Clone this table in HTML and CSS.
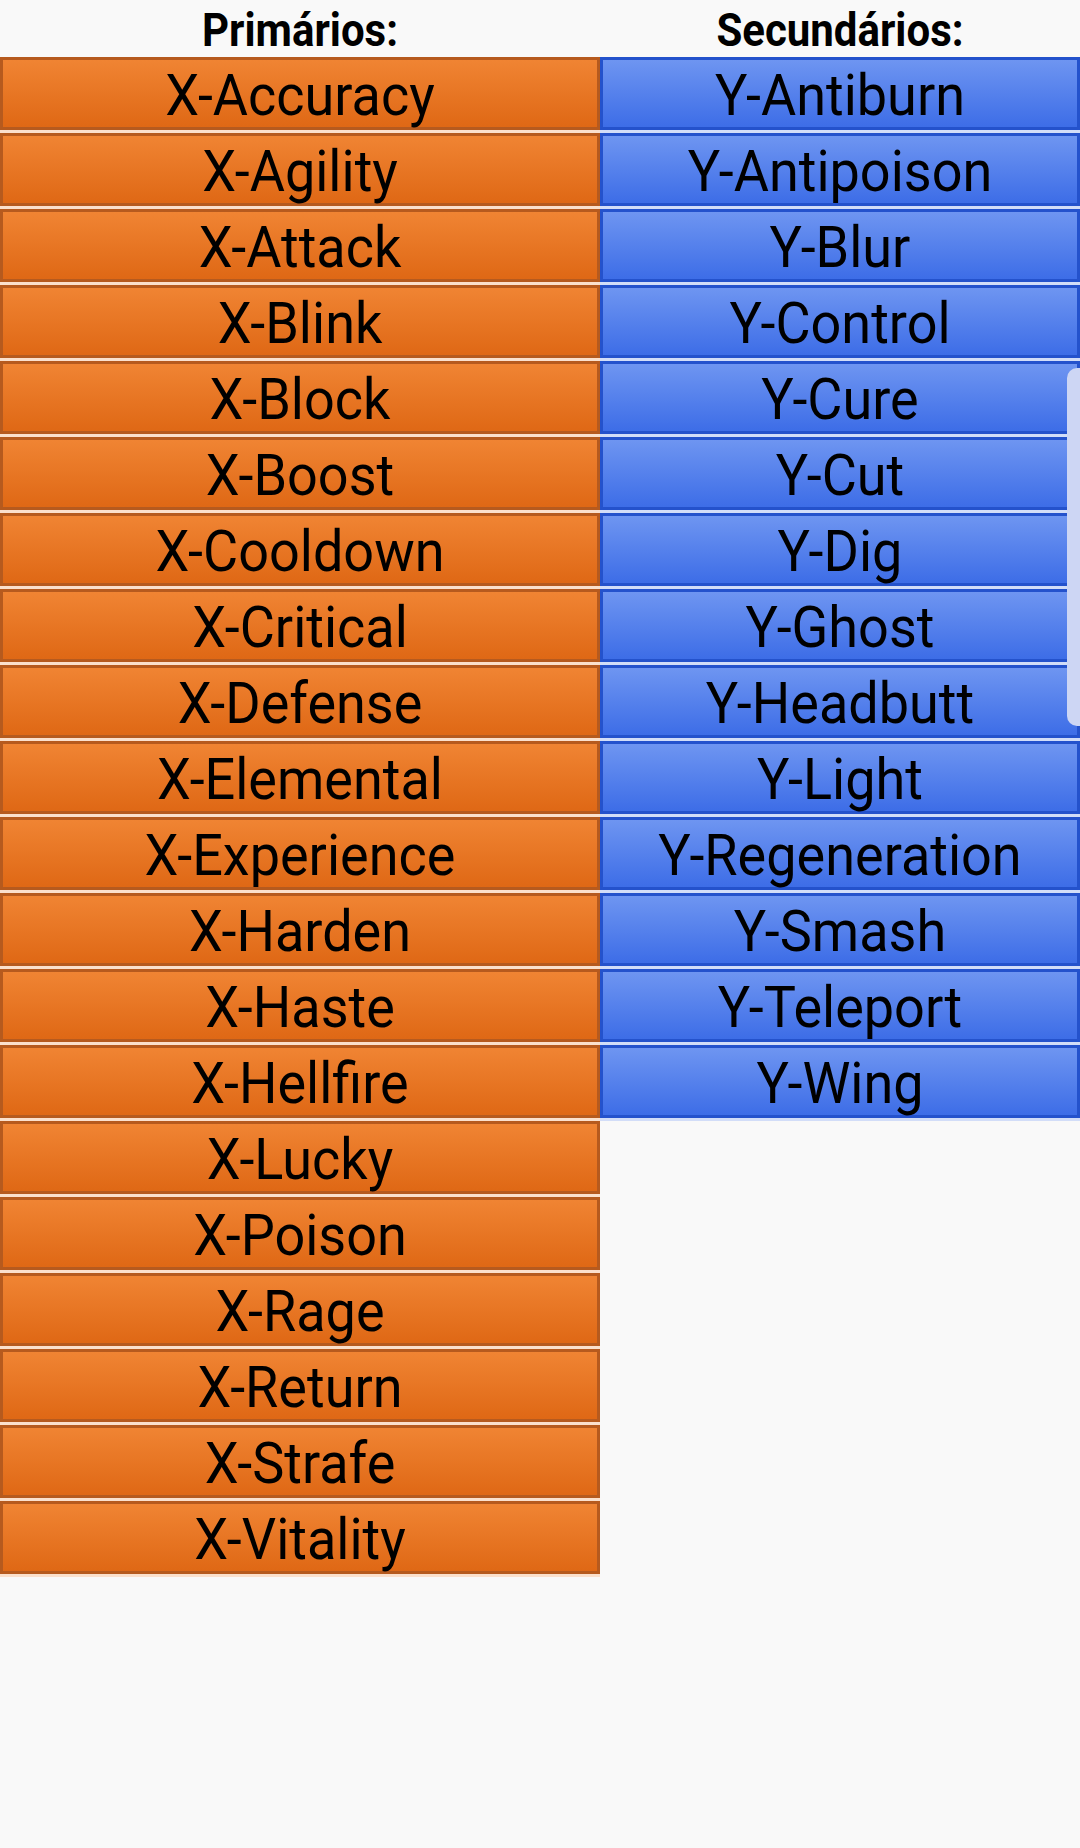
FILE: index.html
```html
<!DOCTYPE html>
<html lang="pt">
<head>
<meta charset="utf-8">
<link rel="stylesheet" href="styles.css">
</head>
<body>
<div class="page">
  <div class="table">
    <div class="col">
      <div class="head"><span>Primários:</span></div>
      <div class="cell x"><span>X-Accuracy</span></div>
      <div class="cell x"><span>X-Agility</span></div>
      <div class="cell x"><span>X-Attack</span></div>
      <div class="cell x"><span>X-Blink</span></div>
      <div class="cell x"><span>X-Block</span></div>
      <div class="cell x"><span>X-Boost</span></div>
      <div class="cell x"><span>X-Cooldown</span></div>
      <div class="cell x"><span>X-Critical</span></div>
      <div class="cell x"><span>X-Defense</span></div>
      <div class="cell x"><span>X-Elemental</span></div>
      <div class="cell x"><span>X-Experience</span></div>
      <div class="cell x"><span>X-Harden</span></div>
      <div class="cell x"><span>X-Haste</span></div>
      <div class="cell x"><span>X-Hellfire</span></div>
      <div class="cell x"><span>X-Lucky</span></div>
      <div class="cell x"><span>X-Poison</span></div>
      <div class="cell x"><span>X-Rage</span></div>
      <div class="cell x"><span>X-Return</span></div>
      <div class="cell x"><span>X-Strafe</span></div>
      <div class="cell x"><span>X-Vitality</span></div>
    </div>
    <div class="col">
      <div class="head"><span>Secundários:</span></div>
      <div class="cell y"><span>Y-Antiburn</span></div>
      <div class="cell y"><span>Y-Antipoison</span></div>
      <div class="cell y"><span>Y-Blur</span></div>
      <div class="cell y"><span>Y-Control</span></div>
      <div class="cell y"><span>Y-Cure</span></div>
      <div class="cell y"><span>Y-Cut</span></div>
      <div class="cell y"><span>Y-Dig</span></div>
      <div class="cell y"><span>Y-Ghost</span></div>
      <div class="cell y"><span>Y-Headbutt</span></div>
      <div class="cell y"><span>Y-Light</span></div>
      <div class="cell y"><span>Y-Regeneration</span></div>
      <div class="cell y"><span>Y-Smash</span></div>
      <div class="cell y"><span>Y-Teleport</span></div>
      <div class="cell y"><span>Y-Wing</span></div>
    </div>
  </div>
  <div class="scrollbar"></div>
</div>
</body>
</html>
```
FILE: styles.css
```css
html, body {
  margin: 0;
  padding: 0;
  background: #f9f9f9;
}
body {
  font-family: Roboto, "Noto Sans", sans-serif;
  color: #000;
}
.page {
  position: relative;
  width: 1080px;
  height: 1848px;
  overflow: hidden;
}
.table {
  display: grid;
  grid-template-columns: 600px 480px;
}
.col {
  display: flex;
  flex-direction: column;
}
.head {
  height: 57px;
  display: flex;
  align-items: center;
  justify-content: center;
  font-weight: 700;
  font-size: 42px;
  padding-top: 4px;
  box-sizing: border-box;
}
.head span {
  display: inline-block;
  transform: scaleY(1.1);
}
.cell {
  height: 73px;
  box-sizing: border-box;
  border: 3px solid;
  margin-bottom: 3px;
  display: flex;
  align-items: center;
  justify-content: center;
  font-size: 54px;
  line-height: 1;
  padding-top: 4px;
}
.cell span {
  display: inline-block;
  transform: scaleY(1.06);
}
.x {
  background: linear-gradient(#f08433, #df6815);
  border-color: #b65a1e;
  box-shadow: 0 3px 0 #fbe0cc;
}
.y {
  background: linear-gradient(#6e95f1, #3d6de7);
  border-color: #2452cc;
  box-shadow: 0 3px 0 #d2ddf8;
}
.scrollbar {
  position: absolute;
  right: 0;
  top: 368px;
  width: 13px;
  height: 358px;
  background: #cdd6f4;
  border-radius: 10px 0 0 10px;
}
```
